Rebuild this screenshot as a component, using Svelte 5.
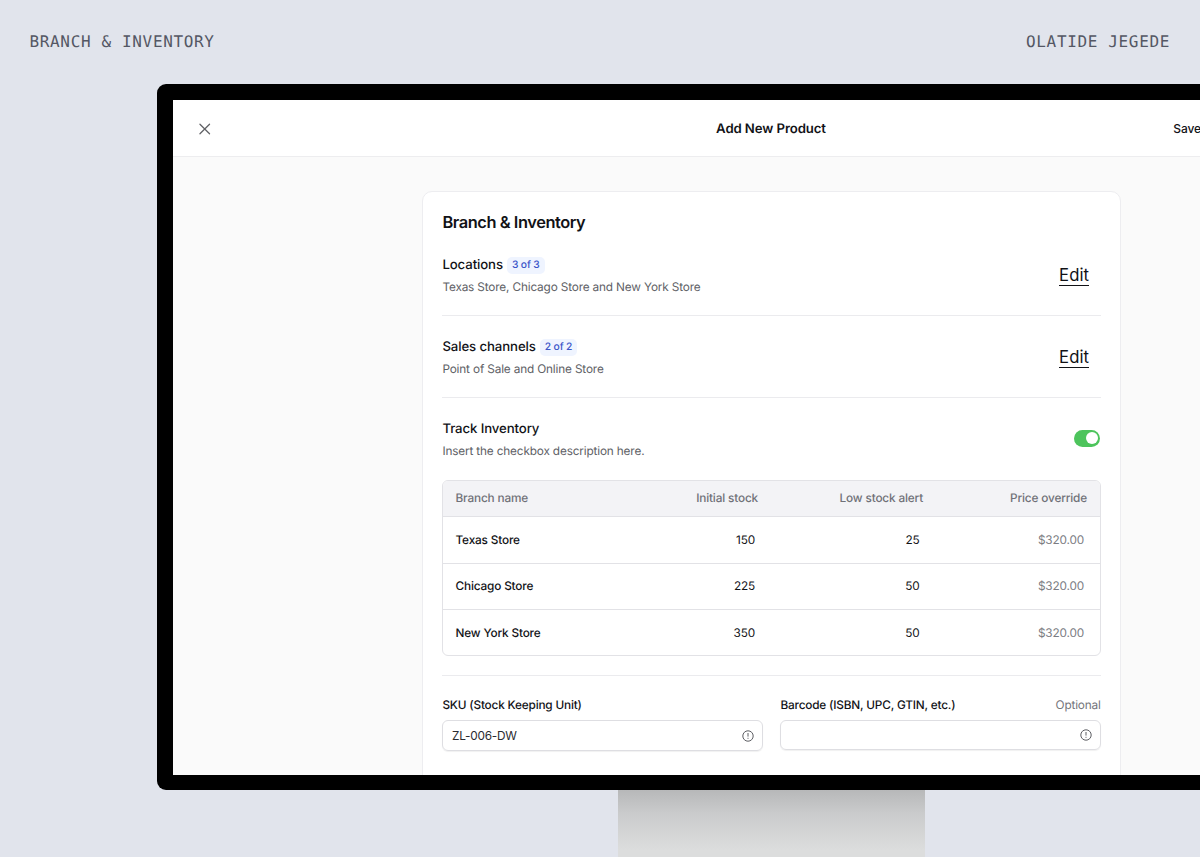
<script lang="ts">
  const sections = [
    { title: 'Locations', count: '3 of 3', detail: 'Texas Store, Chicago Store and New York Store' },
    { title: 'Sales channels', count: '2 of 2', detail: 'Point of Sale and Online Store' }
  ];

  const branches = [
    { name: 'Texas Store', stock: 150, alert: 25, price: '$320.00' },
    { name: 'Chicago Store', stock: 225, alert: 50, price: '$320.00' },
    { name: 'New York Store', stock: 350, alert: 50, price: '$320.00' }
  ];

  let tracking = $state(true);
  let sku = $state('ZL-006-DW');
  let barcode = $state('');
</script>

{#snippet infoIcon()}
  <svg class="info" viewBox="0 0 12 12" aria-hidden="true">
    <circle cx="6" cy="6" r="5.2" />
    <path d="M6 3v3.6M6 7.8v1" />
  </svg>
{/snippet}

<div class="stage">
  <div class="caption">
    <span>BRANCH &amp; INVENTORY</span>
    <span>OLATIDE JEGEDE</span>
  </div>

  <div class="monitor">
    <div class="screen">
      <header class="topbar">
        <button class="close" aria-label="Close">
          <svg viewBox="0 0 12 12" aria-hidden="true"><path d="M1 1l10 10M11 1L1 11" /></svg>
        </button>
        <h1>Add New Product</h1>
        <button class="save">Save</button>
      </header>

      <main>
        <section class="card">
          <h2>Branch &amp; Inventory</h2>

          {#each sections as section}
            <div class="setting">
              <div class="setting__text">
                <h3>{section.title}<span class="badge">{section.count}</span></h3>
                <p>{section.detail}</p>
              </div>
              <button class="edit">Edit</button>
            </div>
          {/each}

          <div class="setting setting--last">
            <div class="setting__text">
              <h3>Track Inventory</h3>
              <p>Insert the checkbox description here.</p>
            </div>
            <button
              class="toggle"
              class:on={tracking}
              role="switch"
              aria-checked={tracking}
              aria-label="Track Inventory"
              onclick={() => (tracking = !tracking)}
            >
              <span class="toggle__knob"></span>
            </button>
          </div>

          <div class="table">
            <div class="row row--head">
              <span>Branch name</span>
              <span>Initial stock</span>
              <span>Low stock alert</span>
              <span>Price override</span>
            </div>
            {#each branches as branch}
              <div class="row">
                <span class="name">{branch.name}</span>
                <span>{branch.stock}</span>
                <span>{branch.alert}</span>
                <span class="price">{branch.price}</span>
              </div>
            {/each}
          </div>

          <div class="fields">
            <div class="field">
              <div class="field__label"><label for="sku">SKU (Stock Keeping Unit)</label></div>
              <div class="control">
                <input id="sku" bind:value={sku} />
                {@render infoIcon()}
              </div>
            </div>
            <div class="field">
              <div class="field__label">
                <label for="barcode">Barcode (ISBN, UPC, GTIN, etc.)</label>
                <span class="optional">Optional</span>
              </div>
              <div class="control control--short">
                <input id="barcode" bind:value={barcode} />
                {@render infoIcon()}
              </div>
            </div>
          </div>
        </section>
      </main>
    </div>
  </div>

  <div class="stand"></div>
</div>

<style>
  .stage {
    display: flex;
    flex-direction: column;
    width: 1200px;
    height: 857px;
    overflow: hidden;
    background: #e1e4ec;
    color: #111216;
    font-family: Inter, 'Liberation Sans', sans-serif;
    letter-spacing: -0.16px;
    text-rendering: geometricPrecision;
  }

  h1,
  h2,
  h3,
  p {
    margin: 0;
  }

  button {
    padding: 0;
    border: 0;
    background: none;
    color: inherit;
    font: inherit;
    cursor: pointer;
  }

  .caption {
    display: flex;
    flex: none;
    justify-content: space-between;
    box-sizing: border-box;
    height: 84px;
    padding: 32px 30px 0 29.5px;
    color: #545764;
    font-family: 'DejaVu Sans Mono', monospace;
    font-size: 16px;
    line-height: 20px;
    letter-spacing: 0.65px;
  }

  .monitor {
    flex: none;
    box-sizing: border-box;
    width: 1228px;
    height: 706px;
    margin-left: 157px;
    padding: 16px;
    border-radius: 9px;
    background: #000;
  }

  .screen {
    height: 674.5px;
    overflow: hidden;
    background: #fafafa;
  }

  .topbar {
    display: grid;
    grid-template-columns: 1fr auto 1fr;
    align-items: center;
    height: 56px;
    padding: 0 26px;
    border-bottom: 1px solid #ededef;
    background: #fff;
  }

  .close {
    display: flex;
    width: 11.5px;
    height: 12px;
    margin-top: 1px;
  }

  .close svg {
    width: 11.5px;
    height: 12px;
    fill: none;
    stroke: #606165;
    stroke-width: 1.3;
    stroke-linecap: round;
  }

  h1 {
    padding-top: 1px;
    font-size: 13.2px;
    font-weight: 600;
    letter-spacing: -0.1px;
  }

  .save {
    justify-self: end;
    margin-right: 142px;
    padding-top: 1px;
    font-size: 12px;
    font-weight: 500;
    letter-spacing: -0.1px;
  }

  main {
    padding: 34px 0 0 249px;
  }

  .card {
    box-sizing: border-box;
    width: 699px;
    height: 640px;
    padding: 20px 19px 0 19px;
    border: 1px solid #ededf0;
    border-radius: 10px;
    background: #fff;
  }

  h2 {
    height: 22px;
    padding-left: 0.4px;
    font-size: 16.4px;
    font-weight: 600;
    line-height: 21px;
    letter-spacing: -0.43px;
  }

  .setting {
    display: flex;
    align-items: center;
    justify-content: space-between;
    box-sizing: border-box;
    height: 82px;
    padding: 21px 0 17.5px;
    border-bottom: 1px solid #ebebee;
  }

  .setting--last {
    border-color: transparent;
  }

  .setting__text {
    padding-left: 0.4px;
  }

  h3 {
    display: flex;
    align-items: center;
    height: 20px;
    margin-bottom: 2px;
    font-size: 13.2px;
    font-weight: 500;
    letter-spacing: -0.1px;
  }

  .badge {
    margin-left: 4px;
    padding: 0 5px;
    border-radius: 5px;
    background: #eff4ff;
    color: #3b55c8;
    font-size: 10.3px;
    line-height: 17px;
    letter-spacing: -0.15px;
  }

  p {
    color: #606166;
    font-size: 11.8px;
    line-height: 20px;
  }

  .edit {
    margin: -1px 12px 0 0;
    border-bottom: 1px solid #111216;
    font-size: 16.7px;
    line-height: 19px;
    letter-spacing: 0.05px;
  }

  .toggle {
    display: flex;
    justify-content: flex-start;
    box-sizing: border-box;
    width: 26px;
    height: 17px;
    padding: 2.5px;
    margin: -4px 1px 0 0;
    border-radius: 9px;
    background: #c9cbd1;
  }

  .toggle.on {
    justify-content: flex-end;
    background: #4dc45c;
  }

  .toggle__knob {
    width: 12px;
    height: 12px;
    border-radius: 50%;
    background: #fff;
  }

  .table {
    box-sizing: border-box;
    height: 176px;
    overflow: hidden;
    border: 1px solid #e2e2e6;
    border-radius: 6px;
  }

  .row {
    display: grid;
    grid-template-columns: 140px 159.5px 164.5px 1fr;
    align-items: center;
    box-sizing: border-box;
    height: 46.5px;
    padding: 0 16px 0 12.5px;
    border-top: 1px solid #e2e2e6;
    font-size: 11.8px;
  }

  .row span:not(:first-child) {
    text-align: right;
  }

  .row--head {
    grid-template-columns: 140px 162.5px 165px 1fr;
    height: 35px;
    padding-right: 13px;
    padding-bottom: 2px;
    border-top: 0;
    background: #f3f3f6;
    color: #707178;
    font-weight: 500;
  }

  .name {
    font-weight: 500;
  }

  .row .price {
    color: #7b7c82;
  }

  .fields {
    display: grid;
    grid-template-columns: 321px 321px;
    justify-content: space-between;
    margin-top: 19px;
    padding-top: 19px;
    border-top: 1px solid #ebebee;
  }

  .field__label {
    display: flex;
    justify-content: space-between;
    margin-bottom: 5px;
    padding: 0 0.4px;
    font-size: 11.8px;
    font-weight: 500;
    line-height: 20px;
    letter-spacing: -0.18px;
  }

  .optional {
    color: #74757b;
    font-weight: 400;
  }

  .control {
    display: flex;
    align-items: center;
    box-sizing: border-box;
    height: 31px;
    padding: 0 8px 0 9px;
    border: 1px solid #dedee2;
    border-radius: 6px;
    box-shadow: 0 1px 1px rgb(0 0 0 / 6%);
  }

  .control--short {
    height: 30px;
  }

  .control input {
    flex: 1;
    min-width: 0;
    padding: 0;
    border: 0;
    outline: none;
    background: none;
    color: #2a2b30;
    font: inherit;
    font-size: 11.8px;
    letter-spacing: -0.22px;
  }

  .info {
    width: 12px;
    height: 12px;
    fill: none;
    stroke: #5d5e63;
    stroke-width: 1;
  }

  .stand {
    flex: 1;
    width: 307px;
    margin-left: 618px;
    background: linear-gradient(#b7b8b9, #cacbcc 35%, #dcdddd 90%);
  }
</style>
